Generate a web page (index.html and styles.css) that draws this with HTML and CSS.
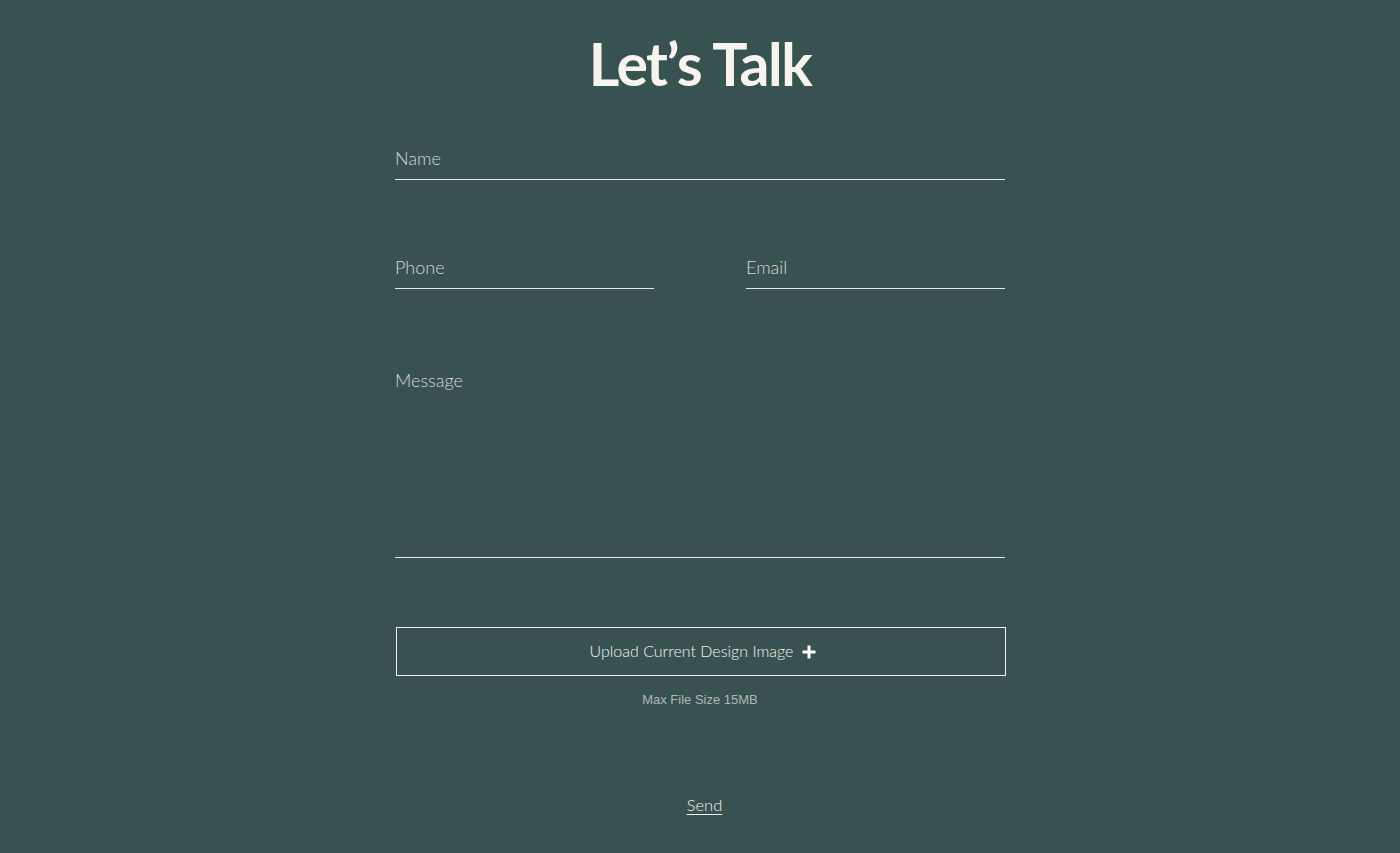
FILE: index.html
```html
<!DOCTYPE html>
<html lang="en">
<head>
<meta charset="utf-8">
<title>Let's Talk</title>
<link rel="stylesheet" href="styles.css">
</head>
<body>
<main class="page">
  <h1 class="title">Let’s Talk</h1>
  <form class="form">
    <input class="field" type="text" placeholder="Name">
    <div class="row">
      <input class="field" type="tel" placeholder="Phone">
      <input class="field" type="email" placeholder="Email">
    </div>
    <textarea class="field message" placeholder="Message"></textarea>
    <button type="button" class="upload">
      <span>Upload Current Design Image</span>
      <svg class="plus" width="14" height="14" viewBox="0 0 14 14"><path d="M7 0.5v13M0.5 7h13" stroke="#fff" stroke-width="3" fill="none"/></svg>
    </button>
    <p class="hint">Max File Size 15MB</p>
    <div class="send-wrap"><button type="button" class="send">Send</button></div>
  </form>
</main>
</body>
</html>
```

FILE: styles.css
```css
html, body {
  margin: 0;
  padding: 0;
  background: #385251;
}
body {
  font-family: "Lato", "Noto Sans", sans-serif;
  color: #f5f1ed;
  height: 853px;
  overflow: hidden;
}
.page {
  width: 610px;
  margin: 0 auto;
  padding-top: 26px;
}
.title {
  margin: 0;
  text-align: center;
  font-size: 59px;
  line-height: 76px;
  font-weight: 700;
  letter-spacing: -1.5px;
  color: #f7f3ef;
}
.form {
  display: flex;
  flex-direction: column;
  margin-top: 39px;
}
.field {
  display: block;
  box-sizing: border-box;
  width: 100%;
  height: 39px;
  background: transparent;
  border: none;
  border-bottom: 1px solid #e6e9e8;
  outline: none;
  padding: 0 0 4px;
  font-family: "Lato", "Noto Sans", sans-serif;
  font-weight: 300;
  font-size: 18px;
  color: #f5f1ed;
}
.field::placeholder {
  color: #d3d8d6;
  opacity: 1;
}
.row {
  display: flex;
  justify-content: space-between;
  margin-top: 70px;
}
.row .field {
  width: 259px;
}
.message {
  margin-top: 70px;
  height: 199px;
  padding-top: 10px;
  resize: none;
}
.upload {
  margin-top: 69px;
  margin-left: 1px;
  height: 49px;
  width: 610px;
  box-sizing: border-box;
  background: transparent;
  border: 1px solid #f0f0ee;
  color: #f2f2f0;
  font-family: "Lato", "Noto Sans", sans-serif;
  font-weight: 300;
  font-size: 16px;
  display: flex;
  align-items: center;
  justify-content: center;
  gap: 9px;
  padding: 0 0 2px 4px;
}
.plus {
  display: block;
  margin-top: 2px;
}
.hint {
  margin: 16px 0 0;
  text-align: center;
  font-family: "Liberation Sans", Arial, sans-serif;
  font-size: 13px;
  color: #aeb8b6;
}
.send-wrap {
  display: flex;
  justify-content: center;
  margin-top: 88px;
  padding-left: 9px;
}
.send {
  background: none;
  border: none;
  padding: 0;
  font-family: "Lato", "Noto Sans", sans-serif;
  font-weight: 300;
  font-size: 16.5px;
  color: #f5f1ed;
  text-decoration: underline;
  text-underline-offset: 3px;
}
```
